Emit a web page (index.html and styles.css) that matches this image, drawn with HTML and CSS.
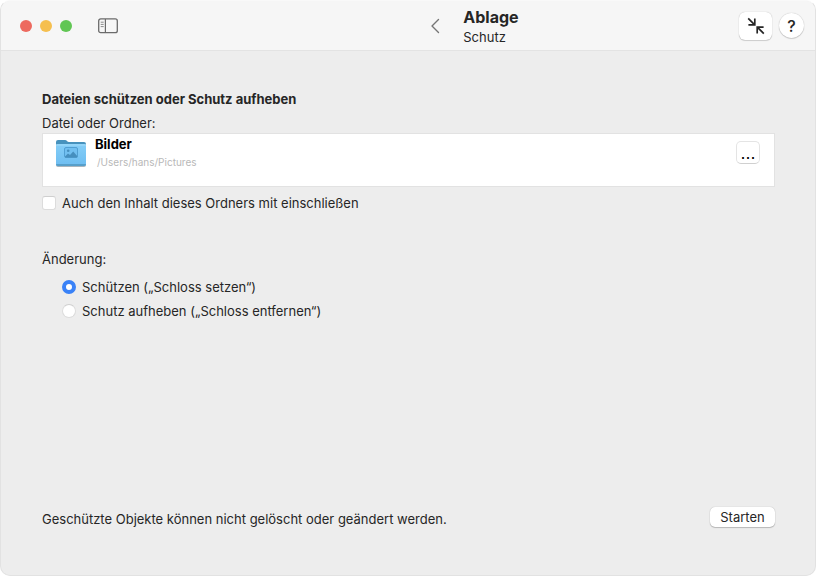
FILE: index.html
```html
<!DOCTYPE html>
<html lang="de">
<head>
    <meta charset="UTF-8">
    <meta name="viewport" content="width=device-width, initial-scale=1.0">
    <title>Ablage – Schutz</title>
    <link rel="stylesheet" href="styles.css">
</head>
<body>
    <div class="window">
        <header class="titlebar">
            <div class="window-controls">
                <button class="light light-close" type="button" aria-label="Schließen"></button>
                <button class="light light-minimize" type="button" aria-label="Minimieren"></button>
                <button class="light light-zoom" type="button" aria-label="Zoomen"></button>
                <button class="icon-button sidebar-button" type="button" aria-label="Seitenleiste">
                    <svg width="20" height="16" viewBox="0 0 20 16" fill="none" stroke="#6b6b6b">
                        <rect x="0.7" y="0.9" width="18.6" height="13.8" rx="2" stroke-width="1.3"/>
                        <path d="M7.4 1v13.6" stroke-width="1.2"/>
                        <path d="M2.7 4.2h3M2.7 6.4h3M2.7 8.6h3" stroke-width="1" stroke="#8a8a8a"/>
                    </svg>
                </button>
            </div>
            <button class="icon-button back-button" type="button" aria-label="Zurück">
                <svg width="10" height="16" viewBox="0 0 10 16" fill="none" stroke="#757575" stroke-width="1.4" stroke-linecap="round" stroke-linejoin="round">
                    <path d="M8.5 1.5L2 8l6.5 6.5"/>
                </svg>
            </button>
            <div class="titles">
                <h1>Ablage</h1>
                <p>Schutz</p>
            </div>
            <div class="toolbar">
                <button class="tool-button" type="button" aria-label="Verkleinern">
                    <svg width="18" height="18" viewBox="0 0 18 18" fill="none" stroke="#262626" stroke-width="1.7">
                        <path d="M1.2 1.4l6 6M7.8 1.6v6.2H1.4"/>
                        <path d="M16.8 16.6l-6-6M10.2 16.4v-6.2h6.4"/>
                    </svg>
                </button>
                <button class="tool-button help-button" type="button" aria-label="Hilfe">?</button>
            </div>
        </header>

        <main class="content">
            <h2>Dateien schützen oder Schutz aufheben</h2>
            <p class="file-label" id="file-label">Datei oder Ordner:</p>
            <div class="file-box" role="group" aria-labelledby="file-label">
                <svg class="folder-icon" width="32" height="30" viewBox="0 0 32 30">
                    <defs>
                        <linearGradient id="folder" x1="0" y1="0" x2="0" y2="1">
                            <stop offset="0" stop-color="#85cef7"/>
                            <stop offset="1" stop-color="#6dbdf1"/>
                        </linearGradient>
                    </defs>
                    <path d="M1 4a2 2 0 0 1 2-2h7c2 0 2 2 4 2h15a2 2 0 0 1 2 2v20H1z" fill="#4792bd"/>
                    <rect x="1" y="6" width="30" height="23" rx="2" fill="#a9b5bd"/>
                    <rect x="1" y="6" width="30" height="22" rx="2" fill="url(#folder)"/>
                    <path d="M1 26h30a2 2 0 0 1-2 2H3a2 2 0 0 1-2-2z" fill="#579fca"/>
                    <path d="M1 7h30" stroke="#a2dcfa"/>
                    <rect x="9.5" y="9.5" width="13" height="10" rx="1.5" fill="#71bff0" stroke="#519fd2"/>
                    <circle cx="13.2" cy="12.8" r="1.3" fill="#468fbe"/>
                    <path d="M10 18.5l3-3 2 1.5 3.2-3.5 4 4.5v1.5H10z" fill="#468fbe"/>
                </svg>
                <div class="file-info">
                    <p class="file-name">Bilder</p>
                    <p class="file-path">/Users/hans/Pictures</p>
                </div>
                <button class="browse-button" type="button" aria-label="Datei auswählen">...</button>
            </div>
            <label class="option">
                <input type="checkbox">
                Auch den Inhalt dieses Ordners mit einschließen
            </label>

            <fieldset class="change">
                <legend>Änderung:</legend>
                <label class="option">
                    <input type="radio" name="change" checked>
                    Schützen („Schloss setzen“)
                </label>
                <label class="option">
                    <input type="radio" name="change">
                    Schutz aufheben („Schloss entfernen“)
                </label>
            </fieldset>

            <footer class="actions">
                <p>Geschützte Objekte können nicht gelöscht oder geändert werden.</p>
                <button class="start-button" type="button">Starten</button>
            </footer>
        </main>
    </div>
</body>
</html>
```
FILE: styles.css
```css
* {
    box-sizing: border-box;
}

body {
    margin: 0;
    background-color: #fff;
    color: #262626;
    font-family: Inter, "Liberation Sans", sans-serif;
    font-size: 13px;
    line-height: 16px;
}

h1, h2, p {
    margin: 0;
}

button {
    padding: 0;
    border: none;
    background-color: #fff;
    color: #262626;
    font: inherit;
}

.window {
    display: flex;
    flex-direction: column;
    min-height: 100vh;
    border: 1px solid #e2e2e2;
    border-top-color: #f9f9f9;
    border-radius: 10px;
    background-color: #ededed;
    overflow: hidden;
}

/* Title bar */
.titlebar {
    display: grid;
    grid-template-columns: 52% 39px 1fr auto;
    align-items: center;
    height: 50px;
    border-bottom: 1px solid #e3e3e3;
    background-color: #f6f6f6;
}

.window-controls {
    display: flex;
    align-items: center;
    gap: 8px;
    padding-left: 19px;
}

.light {
    width: 12px;
    height: 12px;
    border-radius: 50%;
}

.light-close {
    background-color: #ed6a5f;
}

.light-minimize {
    background-color: #f5bf4f;
}

.light-zoom {
    background-color: #61c654;
}

.icon-button {
    display: flex;
    background: none;
}

.sidebar-button {
    margin-left: 18px;
}

.back-button {
    padding-left: 6px;
}

.titles {
    padding-top: 2px;
}

.titles h1 {
    font-size: 16px;
    line-height: 20px;
}

.titles p {
    line-height: 20px;
}

.toolbar {
    display: flex;
    align-items: center;
    gap: 7px;
    padding-right: 11px;
}

.tool-button {
    display: flex;
    align-items: center;
    justify-content: center;
    width: 33px;
    height: 28px;
    border-radius: 6px;
    box-shadow: 0 0 1px rgba(0, 0, 0, 0.3), 0 1px 1px rgba(0, 0, 0, 0.15);
}

.help-button {
    width: 25px;
    height: 25px;
    border-radius: 50%;
    font-size: 16px;
    font-weight: 500;
}

/* Content */
.content {
    flex: 1;
    display: flex;
    flex-direction: column;
    padding: 40px 40px 48px 41px;
}

.content h2 {
    font-size: 13px;
}

.file-label {
    margin-top: 8px;
}

.file-box {
    display: flex;
    align-items: flex-start;
    min-height: 54px;
    margin: 2px 0 8px;
    padding: 2px 14px 0 12px;
    border: 1px solid #e2e2e2;
    background-color: #fff;
}

.folder-icon {
    margin-top: 2px;
}

.file-info {
    flex: 1;
    padding-left: 8px;
}

.file-name {
    color: #000;
    font-weight: 700;
}

.file-path {
    margin-top: 2px;
    padding-left: 2px;
    color: #b8b8b8;
    font-size: 10px;
}

.browse-button {
    width: 24px;
    height: 23px;
    margin-top: 5px;
    border: 1px solid #e4e4e4;
    border-bottom-color: #d0d0d0;
    border-radius: 5px;
    color: #000;
    font-family: "Liberation Sans", sans-serif;
    font-size: 18px;
}

.option {
    display: flex;
    align-items: center;
    gap: 6px;
}

.option input {
    appearance: none;
    width: 14px;
    height: 14px;
    margin: 0;
    border: 1px solid #dcdcdc;
    border-top-color: #cfcfcf;
    border-radius: 3px;
    background-color: #fff;
}

.option input[type="checkbox"]:checked {
    border: 4px solid #3a82f7;
}

.option input[type="radio"] {
    border-radius: 50%;
}

.option input[type="radio"]:checked {
    border: 4px solid #3a82f7;
}

.change {
    display: flex;
    flex-direction: column;
    gap: 8px;
    margin: 40px 0 0;
    padding: 12px 0 0 20px;
    border: none;
}

.change legend {
    margin-left: -20px;
    padding: 0;
}

.actions {
    display: flex;
    align-items: flex-end;
    justify-content: space-between;
    margin-top: auto;
}

.start-button {
    width: 65px;
    height: 20px;
    border-radius: 5px;
    box-shadow: 0 0 1px rgba(0, 0, 0, 0.3), 0 1px 1px rgba(0, 0, 0, 0.2);
}
```
